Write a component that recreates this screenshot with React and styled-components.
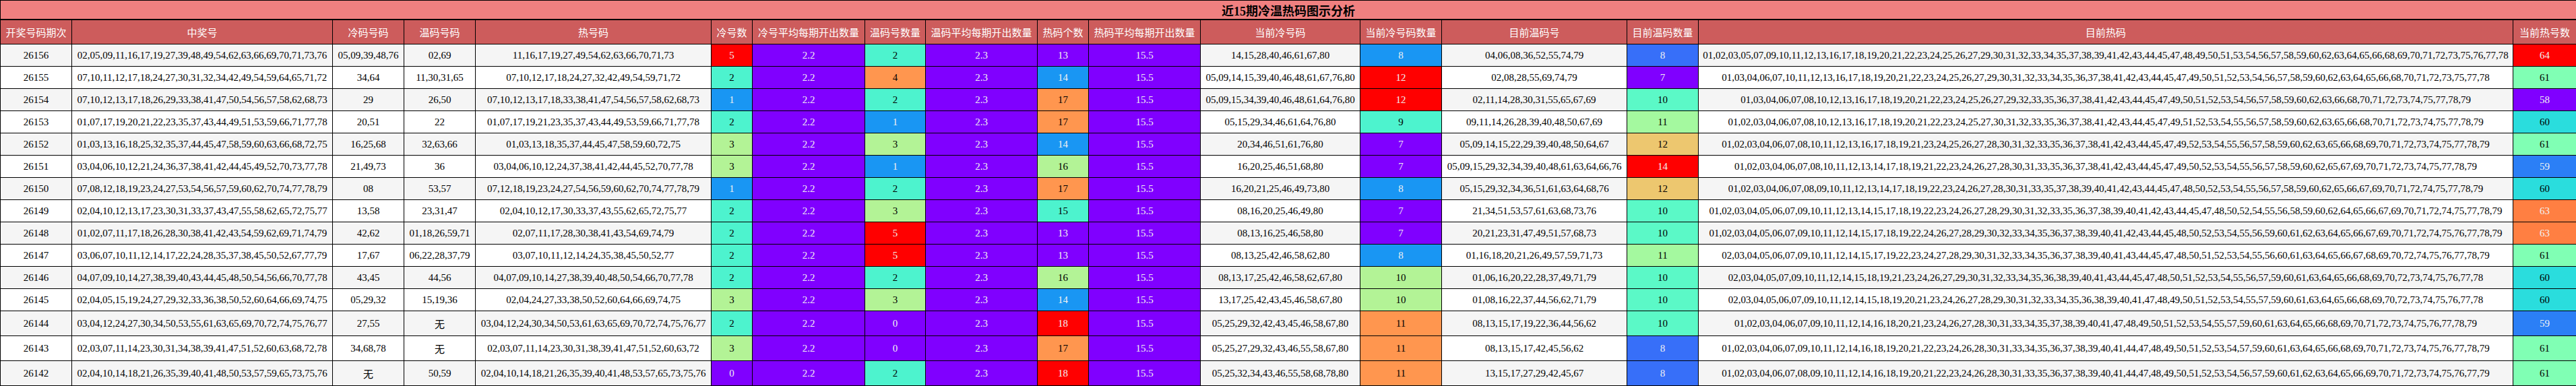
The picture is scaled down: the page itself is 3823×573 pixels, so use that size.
import styled, { createGlobalStyle } from "styled-components";

const GlobalStyle = createGlobalStyle`
  html, body {
    margin: 0;
    padding: 0;
    background: #fff;
  }
`;

const Table = styled.table`
  width: 3823px;
  table-layout: fixed;
  border-collapse: collapse;
  font-family: "Liberation Serif", "Noto Sans CJK SC", serif;
  font-size: 15px;
  color: #000;
  text-align: center;
`;

const TitleCell = styled.th`
  height: 27px;
  padding: 0;
  background-color: #f08080;
  border: 1px solid #000;
  border-bottom: 2px solid #000;
  font-size: 18px;
  font-weight: bold;
`;

const HeadCell = styled.th`
  height: 35px;
  padding: 0;
  background-color: #cd5c5c;
  color: #fff;
  border: 1px solid #000;
  font-weight: normal;
  white-space: nowrap;
`;

const Row = styled.tr`
  height: ${(p) => (p.$tall ? 37 : 33)}px;
  background-color: ${(p) => (p.$striped ? "#f5f5f5" : "#fff")};
`;

const Cell = styled.td`
  padding: 0;
  border: 1px solid #000;
  white-space: nowrap;
`;

// same look as pandas background_gradient with the rainbow map
const rainbow = (x) => {
  const r = Math.min(1, Math.abs(2 * x - 0.5));
  const g = Math.sin(Math.PI * x);
  const b = Math.cos((Math.PI * x) / 2);
  return [r, g, b];
};

const toHex = (c) =>
  "#" + c.map((v) => Math.round(v * 255).toString(16).padStart(2, "0")).join("");

const luminance = (c) => {
  const [r, g, b] = c.map((v) =>
    v <= 0.04045 ? v / 12.92 : Math.pow((v + 0.055) / 1.055, 2.4)
  );
  return 0.2126 * r + 0.7152 * g + 0.0722 * b;
};

const HeatCell = styled(Cell)`
  background-color: ${(p) => toHex(rainbow(p.$ratio))};
  color: ${(p) => (luminance(rainbow(p.$ratio)) < 0.408 ? "#f1f1f1" : "#000")};
`;

const draws = [
  ["26156", "02,05,09,11,16,17,19,27,39,48,49,54,62,63,66,69,70,71,73,76", "05,09,39,48,76", "02,69", "14,15,28,40,46,61,67,80", "04,06,08,36,52,55,74,79"],
  ["26155", "07,10,11,12,17,18,24,27,30,31,32,34,42,49,54,59,64,65,71,72", "34,64", "11,30,31,65", "05,09,14,15,39,40,46,48,61,67,76,80", "02,08,28,55,69,74,79"],
  ["26154", "07,10,12,13,17,18,26,29,33,38,41,47,50,54,56,57,58,62,68,73", "29", "26,50", "05,09,15,34,39,40,46,48,61,64,76,80", "02,11,14,28,30,31,55,65,67,69"],
  ["26153", "01,07,17,19,20,21,22,23,35,37,43,44,49,51,53,59,66,71,77,78", "20,51", "22", "05,15,29,34,46,61,64,76,80", "09,11,14,26,28,39,40,48,50,67,69"],
  ["26152", "01,03,13,16,18,25,32,35,37,44,45,47,58,59,60,63,66,68,72,75", "16,25,68", "32,63,66", "20,34,46,51,61,76,80", "05,09,14,15,22,29,39,40,48,50,64,67"],
  ["26151", "03,04,06,10,12,21,24,36,37,38,41,42,44,45,49,52,70,73,77,78", "21,49,73", "36", "16,20,25,46,51,68,80", "05,09,15,29,32,34,39,40,48,61,63,64,66,76"],
  ["26150", "07,08,12,18,19,23,24,27,53,54,56,57,59,60,62,70,74,77,78,79", "08", "53,57", "16,20,21,25,46,49,73,80", "05,15,29,32,34,36,51,61,63,64,68,76"],
  ["26149", "02,04,10,12,13,17,23,30,31,33,37,43,47,55,58,62,65,72,75,77", "13,58", "23,31,47", "08,16,20,25,46,49,80", "21,34,51,53,57,61,63,68,73,76"],
  ["26148", "01,02,07,11,17,18,26,28,30,38,41,42,43,54,59,62,69,71,74,79", "42,62", "01,18,26,59,71", "08,13,16,25,46,58,80", "20,21,23,31,47,49,51,57,68,73"],
  ["26147", "03,06,07,10,11,12,14,17,22,24,28,35,37,38,45,50,52,67,77,79", "17,67", "06,22,28,37,79", "08,13,25,42,46,58,62,80", "01,16,18,20,21,26,49,57,59,71,73"],
  ["26146", "04,07,09,10,14,27,38,39,40,43,44,45,48,50,54,56,66,70,77,78", "43,45", "44,56", "08,13,17,25,42,46,58,62,67,80", "01,06,16,20,22,28,37,49,71,79"],
  ["26145", "02,04,05,15,19,24,27,29,32,33,36,38,50,52,60,64,66,69,74,75", "05,29,32", "15,19,36", "13,17,25,42,43,45,46,58,67,80", "01,08,16,22,37,44,56,62,71,79"],
  ["26144", "03,04,12,24,27,30,34,50,53,55,61,63,65,69,70,72,74,75,76,77", "27,55", "无", "05,25,29,32,42,43,45,46,58,67,80", "08,13,15,17,19,22,36,44,56,62"],
  ["26143", "02,03,07,11,14,23,30,31,34,38,39,41,47,51,52,60,63,68,72,78", "34,68,78", "无", "05,25,27,29,32,43,46,55,58,67,80", "08,13,15,17,42,45,56,62"],
  ["26142", "02,04,10,14,18,21,26,35,39,40,41,48,50,53,57,59,65,73,75,76", "无", "50,59", "05,25,32,34,43,46,55,58,68,78,80", "13,15,17,27,29,42,45,67"],
];

const split = (s) => (s === "无" ? [] : s.split(","));
const allNumbers = Array.from({ length: 80 }, (_, i) => String(i + 1).padStart(2, "0"));

const rows = draws.map(([issue, winning, cold, warm, curCold, curWarm]) => {
  const out = new Set([...split(cold), ...split(warm)]);
  const hot = split(winning).filter((n) => !out.has(n));
  const curOut = new Set([...split(curCold), ...split(curWarm)]);
  const curHot = allNumbers.filter((n) => !curOut.has(n));
  return {
    issue,
    winning,
    cold,
    warm,
    hot: hot.join(","),
    coldCount: split(cold).length,
    coldAvg: "2.2",
    warmCount: split(warm).length,
    warmAvg: "2.3",
    hotCount: hot.length,
    hotAvg: "15.5",
    curCold,
    curColdCount: split(curCold).length,
    curWarm,
    curWarmCount: split(curWarm).length,
    curHot: curHot.join(","),
    curHotCount: curHot.length,
  };
});

const columns = [
  { key: "issue", label: "开奖号码期次", width: 106 },
  { key: "winning", label: "中奖号", width: 387 },
  { key: "cold", label: "冷码号码", width: 106 },
  { key: "warm", label: "温码号码", width: 106 },
  { key: "hot", label: "热号码", width: 350 },
  { key: "coldCount", label: "冷号数", width: 61, heat: true },
  { key: "coldAvg", label: "冷号平均每期开出数量", width: 167, flat: true },
  { key: "warmCount", label: "温码号数量", width: 90, heat: true },
  { key: "warmAvg", label: "温码平均每期开出数量", width: 166, flat: true },
  { key: "hotCount", label: "热码个数", width: 76, heat: true },
  { key: "hotAvg", label: "热码平均每期开出数量", width: 166, flat: true },
  { key: "curCold", label: "当前冷号码", width: 237 },
  { key: "curColdCount", label: "当前冷号码数量", width: 121, heat: true },
  { key: "curWarm", label: "目前温码号", width: 275 },
  { key: "curWarmCount", label: "目前温码数量", width: 106, heat: true },
  { key: "curHot", label: "目前热码", width: 1209 },
  { key: "curHotCount", label: "当前热号数", width: 94, heat: true },
];

const ratioOf = (col, value) => {
  if (col.flat) return 0;
  const values = rows.map((r) => r[col.key]);
  const min = Math.min(...values);
  const max = Math.max(...values);
  return (value - min) / (max - min);
};

const Column = styled.col`
  width: ${(p) => p.$width}px;
`;

const App = () => (
  <>
    <GlobalStyle />
    <Table>
      <colgroup>
        {columns.map((col) => (
          <Column key={col.key} $width={col.width} />
        ))}
      </colgroup>
      <thead>
        <tr>
          <TitleCell colSpan={columns.length}>近15期冷温热码图示分析</TitleCell>
        </tr>
        <tr>
          {columns.map((col) => (
            <HeadCell key={col.key}>{col.label}</HeadCell>
          ))}
        </tr>
      </thead>
      <tbody>
        {rows.map((row, i) => (
          <Row
            key={row.issue}
            $striped={i % 2 === 0}
            $tall={row.cold === "无" || row.warm === "无"}
          >
            {columns.map((col) =>
              col.heat || col.flat ? (
                <HeatCell key={col.key} $ratio={ratioOf(col, row[col.key])}>
                  {row[col.key]}
                </HeatCell>
              ) : (
                <Cell key={col.key}>{row[col.key]}</Cell>
              )
            )}
          </Row>
        ))}
      </tbody>
    </Table>
  </>
);

export default App;
